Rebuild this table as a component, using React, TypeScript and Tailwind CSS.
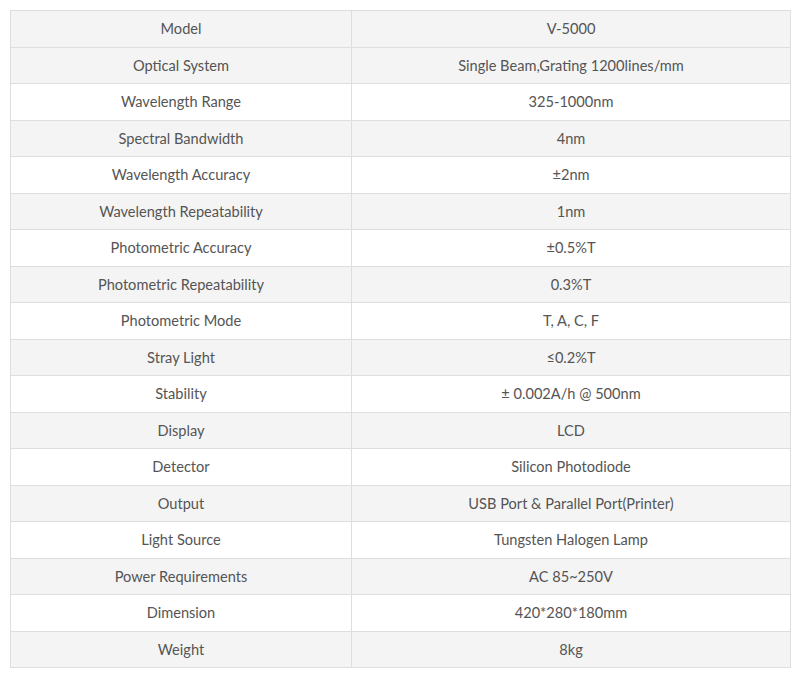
const specs: [string, string][] = [
  ['Model', 'V-5000'],
  ['Optical System', 'Single Beam,Grating 1200lines/mm'],
  ['Wavelength Range', '325-1000nm'],
  ['Spectral Bandwidth', '4nm'],
  ['Wavelength Accuracy', '±2nm'],
  ['Wavelength Repeatability', '1nm'],
  ['Photometric Accuracy', '±0.5%T'],
  ['Photometric Repeatability', '0.3%T'],
  ['Photometric Mode', 'T, A, C, F'],
  ['Stray Light', '≤0.2%T'],
  ['Stability', '± 0.002A/h @ 500nm'],
  ['Display', 'LCD'],
  ['Detector', 'Silicon Photodiode'],
  ['Output', 'USB Port & Parallel Port(Printer)'],
  ['Light Source', 'Tungsten Halogen Lamp'],
  ['Power Requirements', 'AC 85~250V'],
  ['Dimension', '420*280*180mm'],
  ['Weight', '8kg'],
];

export default function App() {
  return (
    <div className="w-[800px] h-[674px] bg-white pt-[10px] pl-[10px] font-['Lato',sans-serif]">
      <table className="w-[781px] table-fixed border-collapse text-[14.6px] text-[#555]">
        <colgroup>
          <col className="w-[341px]" />
          <col />
        </colgroup>
        <tbody>
          {specs.map(([label, value], i) => (
            <tr key={label} className={i === 0 || i % 2 === 1 ? 'bg-[#f4f4f4]' : 'bg-white'}>
              <td className="h-[36.5px] border border-[#dedede] px-0 pt-px pb-0 text-center align-middle">{label}</td>
              <td className="h-[36.5px] border border-[#dedede] px-0 pt-px pb-0 text-center align-middle">{value}</td>
            </tr>
          ))}
        </tbody>
      </table>
    </div>
  );
}
